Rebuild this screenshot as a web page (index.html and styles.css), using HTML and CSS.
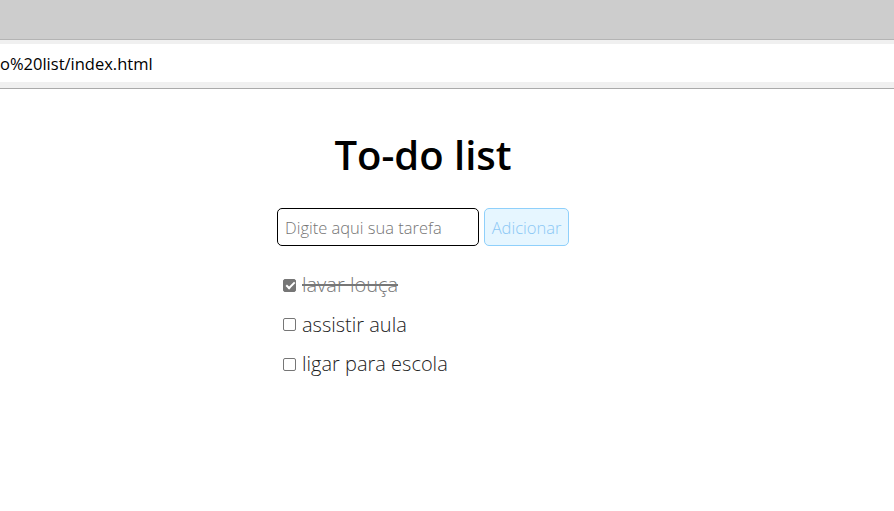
FILE: index.html
```html
<!DOCTYPE html>
<html lang="pt">
<head>
<meta charset="utf-8">
<title>To-do list</title>
<link rel="stylesheet" href="styles.css">
</head>
<body>
<div class="chrome">
  <div class="tabbar"></div>
  <div class="toolbar">
    <div class="urlbox">o%20list/index.html</div>
  </div>
</div>
<main class="page">
  <h1 class="title">To-do list</h1>
  <form class="add-form">
    <input class="task-input" type="text" placeholder="Digite aqui sua tarefa">
    <button class="add-btn" type="button">Adicionar</button>
  </form>
  <ul class="tasks">
    <li class="task done"><input type="checkbox" checked><span>lavar louça</span></li>
    <li class="task"><input type="checkbox"><span>assistir aula</span></li>
    <li class="task"><input type="checkbox"><span>ligar para escola</span></li>
  </ul>
</main>
</body>
</html>
```

FILE: styles.css
```css
html, body {
  margin: 0;
  padding: 0;
  background: #fff;
}
.chrome {
  display: flex;
  flex-direction: column;
}
.tabbar {
  height: 39px;
  background: #cdcdcd;
  border-bottom: 1px solid #b4b4b4;
}
.toolbar {
  background: #f0f0f0;
  padding: 4px 0 6px;
  border-bottom: 1px solid #aaaaaa;
}
.urlbox {
  height: 38px;
  background: #fff;
  display: flex;
  align-items: center;
  font-family: "Open Sans", sans-serif;
  font-size: 16.5px;
  color: #000;
}
.page {
  width: 292px;
  margin: 0 0 0 277px;
  font-family: "Open Sans", sans-serif;
}
.title {
  margin: 0;
  padding-top: 38px;
  text-align: center;
  font-size: 40px;
  font-weight: 600;
  line-height: 56px;
  color: #000;
}
.add-form {
  display: flex;
  gap: 5px;
  margin-top: 25px;
}
.task-input {
  box-sizing: border-box;
  width: 202px;
  height: 38px;
  border: 1px solid #000;
  border-radius: 5px;
  padding: 0 7px;
  font-family: "Open Sans", sans-serif;
  font-weight: 300;
  font-size: 16.5px;
  outline: none;
}
.task-input::placeholder {
  color: #757575;
}
.add-btn {
  box-sizing: border-box;
  width: 85px;
  height: 38px;
  border: 1px solid #8fd0fb;
  border-radius: 5px;
  background: #e6f6ff;
  color: #8cc8f5;
  font-family: "Open Sans", sans-serif;
  font-weight: 300;
  font-size: 16.5px;
  padding: 0;
}
.tasks {
  list-style: none;
  margin: 25px 0 0;
  padding: 0 0 0 6px;
  display: flex;
  flex-direction: column;
  gap: 11.5px;
}
.task {
  display: flex;
  align-items: center;
  font-size: 20px;
  font-weight: 300;
  color: #222;
  line-height: 28px;
}
.task input {
  appearance: none;
  -webkit-appearance: none;
  box-sizing: border-box;
  margin: 0 6px 0 0;
  width: 13px;
  height: 13px;
  border: 1px solid #767676;
  border-radius: 2px;
  background: #fff;
  position: relative;
  flex: none;
}
.task input:checked {
  background: #767676;
}
.task input:checked::after {
  content: "";
  position: absolute;
  left: 3.5px;
  top: 0.5px;
  width: 3px;
  height: 7px;
  border: solid #fff;
  border-width: 0 2px 2px 0;
  transform: rotate(45deg);
}
.task.done span {
  text-decoration: line-through;
  color: #777;
}
```
